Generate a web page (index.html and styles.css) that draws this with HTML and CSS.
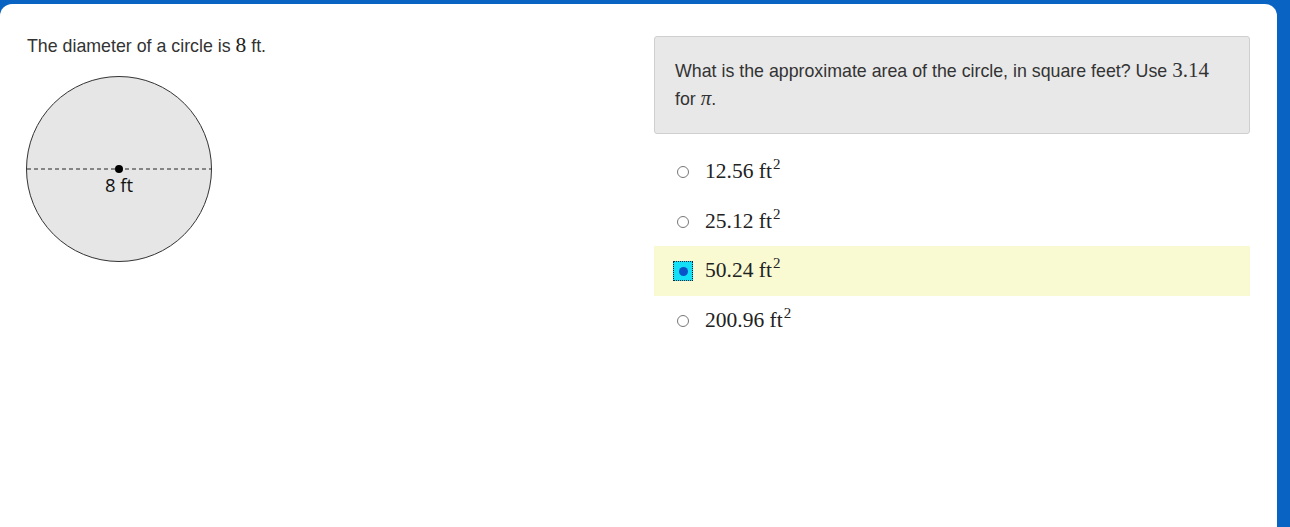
FILE: index.html
```html
<!DOCTYPE html>
<html>
<head>
<meta charset="utf-8">
<link rel="stylesheet" href="styles.css">
</head>
<body>
<div class="card">
  <div class="left">
    <p class="stem">The diameter of a circle is <span class="m">8</span> ft.</p>
    <svg class="figure" width="190" height="190" viewBox="0 0 190 190">
      <circle cx="93" cy="93" r="92.5" fill="#e6e6e6" stroke="#333" stroke-width="1"/>
      <line x1="1" y1="93" x2="185" y2="93" stroke="#666" stroke-width="1.3" stroke-dasharray="4 3"/>
      <circle cx="93" cy="93" r="4" fill="#000"/>
      <text x="93" y="116" text-anchor="middle" class="lbl">8 ft</text>
    </svg>
  </div>
  <div class="right">
    <div class="prompt">What is the approximate area of the circle, in square feet? Use <span class="m">3.14</span> for <span class="m i">π</span>.</div>
    <div class="choices">
      <label class="choice"><span class="radio"></span><span class="m">12.56 ft<sup>2</sup></span></label>
      <label class="choice"><span class="radio"></span><span class="m">25.12 ft<sup>2</sup></span></label>
      <label class="choice selected"><span class="radio on"><span class="dot"></span></span><span class="m">50.24 ft<sup>2</sup></span></label>
      <label class="choice"><span class="radio"></span><span class="m">200.96 ft<sup>2</sup></span></label>
    </div>
  </div>
</div>
</body>
</html>
```
FILE: styles.css
```css
html, body {
  margin: 0;
  padding: 0;
  background: #0863c3;
  height: 527px;
  overflow: hidden;
}
.card {
  margin-top: 4px;
  width: 1277px;
  height: 540px;
  background: #fff;
  border-radius: 12px;
  display: flex;
  box-sizing: border-box;
  padding: 0 27px 0 26px;
  font-family: "Liberation Sans", Arial, sans-serif;
  color: #333;
  font-size: 17.8px;
}
.left {
  width: 628px;
  padding-top: 30px;
}
.stem {
  margin: 0 0 0 1px;
  line-height: 22px;
}
.m {
  font-family: "Liberation Serif", "Times New Roman", serif;
  font-size: 21.5px;
  color: #222;
}
.i { font-style: italic; }
.figure {
  display: block;
  margin-top: 19px;
  overflow: visible;
}
.lbl {
  font-family: "Open Sans", "Noto Sans", sans-serif;
  font-size: 18.5px;
  fill: #111;
}
.right {
  flex: 1;
  padding-top: 32px;
}
.prompt {
  background: #e8e8e8;
  border: 1px solid #cfcfcf;
  border-radius: 3px;
  padding: 20px 20px 20px 20px;
  line-height: 28px;
}
.prompt .m { font-size: 21px; color: #333; line-height: 0; }
.choices {
  margin-top: 13px;
  display: flex;
  flex-direction: column;
}
.choice {
  height: 49.5px;
  display: flex;
  align-items: center;
  padding-left: 23px;
  gap: 16px;
}
.choice .m { color: #222; }
.choice sup {
  font-size: 15px;
  line-height: 0;
  position: relative;
  top: -1px;
  margin-left: 1px;
}
.choice.selected {
  background: #fafad2;
}
.radio {
  width: 10px;
  height: 10px;
  border: 1px solid #777;
  border-radius: 50%;
  background: #fff;
  box-sizing: content-box;
  margin-top: 1px;
  flex: none;
}
.radio.on {
  width: 18px;
  height: 18px;
  border: 1px dotted #123;
  border-radius: 0;
  background: #13e0f6;
  display: flex;
  align-items: center;
  justify-content: center;
  margin-left: -4px;
  margin-right: -4px;
}
.dot {
  width: 9px;
  height: 9px;
  border-radius: 50%;
  background: #0a52c8;
}
```
